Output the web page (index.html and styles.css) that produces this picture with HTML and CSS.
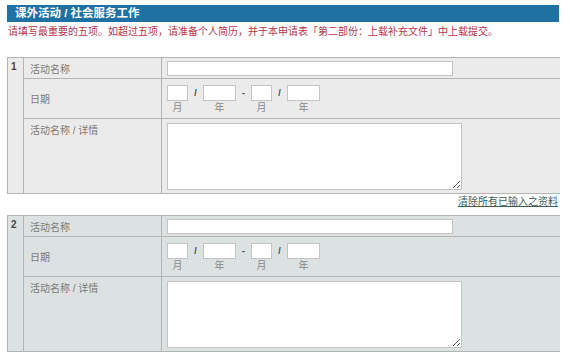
FILE: index.html
```html
<!DOCTYPE html>
<html lang="zh-CN">
<head>
  <meta charset="UTF-8">
  <title>课外活动 / 社会服务工作</title>
  <link rel="stylesheet" href="styles.css">
</head>
<body>

  <!-- 标题栏 -->
  <h2 class="section-title">课外活动 / 社会服务工作</h2>
  <p class="note">请填写最重要的五项。如超过五项，请准备个人简历，并于本申请表「第二部份：上载补充文件」中上载提交。</p>

  <!-- 活动 1 -->
  <table class="activity">
    <colgroup>
      <col class="c-num"><col class="c-label"><col class="c-value">
    </colgroup>
    <tr class="row-name">
      <td class="num" rowspan="3">1</td>
      <td class="label">活动名称</td>
      <td class="value"><input type="text" class="name-input"></td>
    </tr>
    <tr class="row-date">
      <td class="label">日期</td>
      <td class="value">
        <div class="date">
          <div class="date-part"><input type="text" class="d-month"><span>月</span></div>
          <span class="sep">/</span>
          <div class="date-part"><input type="text" class="d-year"><span>年</span></div>
          <span class="sep">-</span>
          <div class="date-part"><input type="text" class="d-month"><span>月</span></div>
          <span class="sep">/</span>
          <div class="date-part"><input type="text" class="d-year"><span>年</span></div>
        </div>
      </td>
    </tr>
    <tr class="row-detail">
      <td class="label top">活动名称 / 详情</td>
      <td class="value"><textarea></textarea></td>
    </tr>
  </table>

  <div class="clear-row"><a href="#" class="clear-link">清除所有已输入之资料</a></div>

  <!-- 活动 2 -->
  <table class="activity alt">
    <colgroup>
      <col class="c-num"><col class="c-label"><col class="c-value">
    </colgroup>
    <tr class="row-name">
      <td class="num" rowspan="3">2</td>
      <td class="label">活动名称</td>
      <td class="value"><input type="text" class="name-input"></td>
    </tr>
    <tr class="row-date">
      <td class="label">日期</td>
      <td class="value">
        <div class="date">
          <div class="date-part"><input type="text" class="d-month"><span>月</span></div>
          <span class="sep">/</span>
          <div class="date-part"><input type="text" class="d-year"><span>年</span></div>
          <span class="sep">-</span>
          <div class="date-part"><input type="text" class="d-month"><span>月</span></div>
          <span class="sep">/</span>
          <div class="date-part"><input type="text" class="d-year"><span>年</span></div>
        </div>
      </td>
    </tr>
    <tr class="row-detail">
      <td class="label top">活动名称 / 详情</td>
      <td class="value"><textarea></textarea></td>
    </tr>
  </table>

</body>
</html>
```

FILE: styles.css
```css
/* 页面基础 */
body {
  margin: 5px 10px 0 7px;
  font-family: "Liberation Sans", "Noto Sans CJK SC", sans-serif;
  font-size: 10px;
  color: #666;
  background: #fff;
}

/* 标题栏 */
.section-title {
  margin: 0;
  width: 544px;
  height: 17px;
  line-height: 17px;
  padding-left: 8px;
  background-color: #1f70a3;
  color: #fff;
  font-size: 11.5px;
  font-weight: bold;
}

.note {
  margin: 2px 0 0 1px;
  height: 33px;
  line-height: 15px;
  color: #b6344c;
  font-size: 10px;
}

/* 活动表格 */
.activity {
  width: 553px;
  table-layout: fixed;
  border-collapse: collapse;
  background-color: #ebebeb;
  border: 1px solid #b4b4b4;
}

.activity.alt {
  background-color: #dce1e1;
}

.c-num { width: 16px; }
.c-label { width: 138px; }
.c-value { width: 399px; }

.activity td {
  border: 1px solid #b4b4b4;
  padding: 0;
}

.num {
  vertical-align: top;
  padding: 3px 0 0 3px !important;
  font-family: "Liberation Sans", sans-serif;
  font-weight: bold;
  font-size: 10px;
  color: #444;
}

.label {
  padding-left: 6px !important;
  vertical-align: middle;
  color: #7a7a7a;
}

.label.top {
  vertical-align: top;
  padding-top: 3px !important;
}

.value {
  padding: 0 5px !important;
}

.row-name td { height: 20px; }
.row-date td { height: 39px; }
.row-detail td { height: 71px; }

/* 输入框 */
input[type="text"], textarea {
  box-sizing: border-box;
  border: 1px solid #c4c4c4;
  background: #fff;
  margin: 0;
  padding: 0;
  font-size: 10px;
}

.name-input {
  display: block;
  width: 286px;
  height: 15px;
}

.date {
  display: flex;
  align-items: flex-start;
  padding-top: 2px;
}

.date-part {
  display: flex;
  flex-direction: column;
  align-items: center;
}

.date-part span {
  line-height: 13px;
  color: #888;
}

.d-month { width: 21px; height: 16px; }
.d-year { width: 33px; height: 16px; }

.sep {
  width: 15px;
  text-align: center;
  line-height: 16px;
  color: #444;
  font-weight: bold;
  font-size: 9px;
}

textarea {
  display: block;
  width: 295px;
  height: 67px;
  margin: 0;
}

/* 清除链接 */
.clear-row {
  width: 551px;
  text-align: right;
  height: 21px;
  line-height: 15px;
}

.clear-link {
  color: #3f5c57;
  font-size: 10px;
}
```
